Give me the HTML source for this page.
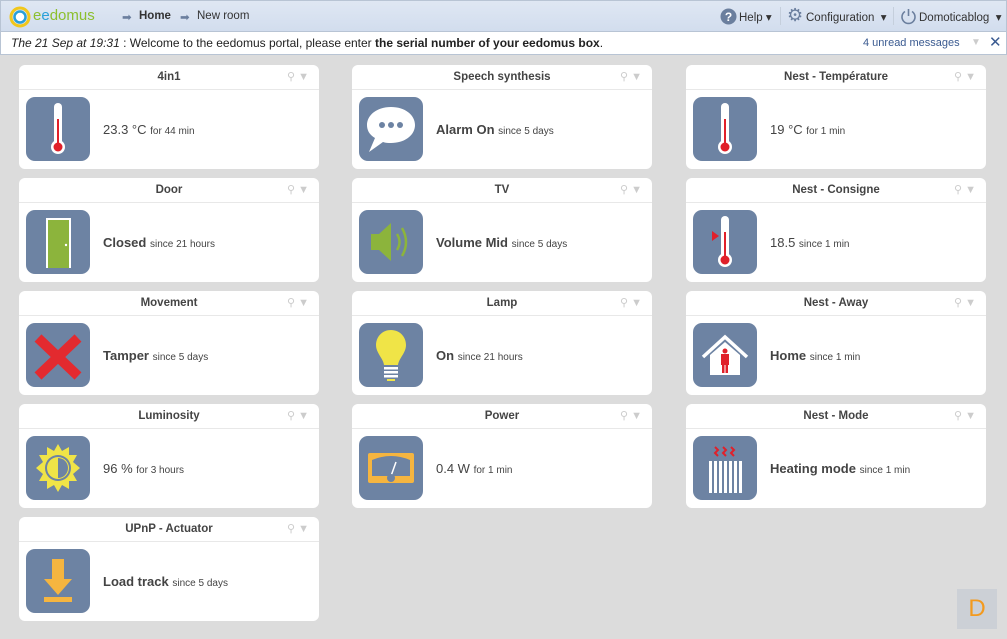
<!DOCTYPE html><html><head><meta charset="utf-8"><style>
body{margin:0;width:1007px;height:639px;background:#dcdcdc;font-family:"Liberation Sans",Arial,sans-serif;position:relative;overflow:hidden}
.top{position:absolute;left:0;top:0;width:1005px;height:30px;background:linear-gradient(#dfe7f3,#d2ddee);border:1px solid #b8c4d4;border-bottom:none}
.msg{position:absolute;left:0;top:31px;width:1005px;height:22px;background:#fff;border:1px solid #b8c4d4;font-size:12px;line-height:22px;color:#222}
.t{position:absolute;font-size:11.5px;color:#333;top:9px}
.card{position:absolute;width:300px;height:104px;background:#fff;border-radius:6px}
.card .h{height:24px;border-bottom:1px solid #e8e8e8;text-align:center;font-weight:bold;font-size:11.5px;line-height:24px;color:#444}
.card .tools{position:absolute;right:10px;top:5px;color:#ccc;font-size:11px}
.card svg{position:absolute;left:7px;top:32px}
.card .v{position:absolute;left:84px;top:57px;font-size:13px;color:#444}
.card .v b{color:#444}
.card .v small{font-size:10px}
</style></head><body>
<div class="top">
<svg style="position:absolute;left:8px;top:5px" width="22" height="22"><circle cx="11" cy="11" r="9" fill="none" stroke="#f1c71b" stroke-width="3"/><circle cx="11" cy="11" r="5.5" fill="#fff" stroke="#2aa0d8" stroke-width="2.5"/></svg>
<div class="t" style="left:32px;top:6px;font-size:15px;color:#8cbf2e">e<span style="color:#2aa0d8">e</span>domus</div>
<div class="t" style="left:121px;color:#6b7f9e">➡</div><div class="t" style="left:138px;font-weight:bold">Home</div>
<div class="t" style="left:179px;color:#6b7f9e">➡</div><div class="t" style="left:196px">New room</div>
<svg style="position:absolute;left:719px;top:7px" width="17" height="17"><circle cx="8.5" cy="8.5" r="8" fill="#6b7f9e"/><text x="8.5" y="13" font-size="12" font-weight="bold" fill="#fff" text-anchor="middle" font-family="Liberation Sans">?</text></svg>
<div class="t" style="left:738px">Help ▾</div>
<div style="position:absolute;left:779px;top:6px;width:1px;height:18px;background:#c5cfdc"></div>
<div class="t" style="left:786px;top:4px;font-size:18px;color:#6b7f9e">⚙</div>
<div class="t" style="left:805px">Configuration &nbsp;▾</div>
<div style="position:absolute;left:892px;top:6px;width:1px;height:18px;background:#c5cfdc"></div>
<svg style="position:absolute;left:899px;top:7px" width="17" height="17"><path d="M5 3.5A6.5 6.5 0 1 0 12 3.5" fill="none" stroke="#6b7f9e" stroke-width="1.6"/><line x1="8.5" y1="1" x2="8.5" y2="8" stroke="#6b7f9e" stroke-width="1.6"/></svg>
<div class="t" style="left:918px">Domoticablog &nbsp;▾</div>
</div>
<div class="msg"><span style="margin-left:10px"><i>The 21 Sep at 19:31 </i>: Welcome to the eedomus portal, please enter <b>the serial number of your eedomus box</b>.</span>
<span style="position:absolute;left:862px;color:#3a5a90;font-size:11px">4 unread messages</span><span style="position:absolute;left:970px;color:#ccc;font-size:10px">▼</span><span style="position:absolute;left:988px;color:#3a5a90;font-size:15px">✕</span></div>

<div class="card" style="left:19px;top:65px"><div class="h">4in1</div><div class="tools">⚲ ▼</div>
<svg width="64" height="64"><rect width="64" height="64" rx="9" fill="#6d83a3"/><rect x="28" y="6" width="8" height="42" rx="4" fill="#fff"/><circle cx="32" cy="50" r="7" fill="#fff"/><rect x="31" y="22" width="2" height="28" fill="#e0202a"/><circle cx="32" cy="50" r="4.5" fill="#e0202a"/></svg>
<div class="v">23.3 °C <small>for 44 min</small></div></div>
<div class="card" style="left:19px;top:178px"><div class="h">Door</div><div class="tools">⚲ ▼</div>
<svg width="64" height="64"><rect width="64" height="64" rx="9" fill="#6d83a3"/><rect x="20" y="8" width="25" height="50" fill="#fff"/><rect x="22" y="10" width="21" height="48" fill="#8cb43c"/><circle cx="40" cy="35" r="1.2" fill="#fff"/></svg>
<div class="v"><b>Closed</b> <small>since 21 hours</small></div></div>
<div class="card" style="left:19px;top:291px"><div class="h">Movement</div><div class="tools">⚲ ▼</div>
<svg width="64" height="64"><rect width="64" height="64" rx="9" fill="#6d83a3"/><path d="M12 15L52 53M52 15L12 53" stroke="#e32a2f" stroke-width="10"/></svg>
<div class="v"><b>Tamper</b> <small>since 5 days</small></div></div>
<div class="card" style="left:19px;top:404px"><div class="h">Luminosity</div><div class="tools">⚲ ▼</div>
<svg width="64" height="64"><rect width="64" height="64" rx="9" fill="#6d83a3"/><polygon points="32,8 36,15 43,11 43,19 51,19 47,26 54,32 47,38 51,45 43,45 43,53 36,49 32,56 28,49 21,53 21,45 13,45 17,38 10,32 17,26 13,19 21,19 21,11 28,15" fill="#f0e447"/><circle cx="32" cy="32" r="13" fill="#6d83a3"/><circle cx="32" cy="32" r="11" fill="#f0e447"/><path d="M32 22A10 10 0 0 1 32 42Z" fill="#6d83a3"/></svg>
<div class="v">96 % <small>for 3 hours</small></div></div>
<div class="card" style="left:19px;top:517px"><div class="h">UPnP - Actuator</div><div class="tools">⚲ ▼</div>
<svg width="64" height="64"><rect width="64" height="64" rx="9" fill="#6d83a3"/><path d="M26 10H38V30H46L32 46L18 30H26Z" fill="#f5b540"/><rect x="18" y="48" width="28" height="5" fill="#f5b540"/></svg>
<div class="v"><b>Load track</b> <small>since 5 days</small></div></div>

<div class="card" style="left:352px;top:65px"><div class="h">Speech synthesis</div><div class="tools">⚲ ▼</div>
<svg width="64" height="64"><rect width="64" height="64" rx="9" fill="#6d83a3"/><path d="M32 10C18 10 8 18 8 28C8 34 11 38 16 41L10 55L24 45C27 46 29 46 32 46C46 46 56 38 56 28C56 18 46 10 32 10Z" fill="#fff"/><circle cx="23" cy="28" r="3" fill="#6d83a3"/><circle cx="32" cy="28" r="3" fill="#6d83a3"/><circle cx="41" cy="28" r="3" fill="#6d83a3"/></svg>
<div class="v"><b>Alarm On</b> <small>since 5 days</small></div></div>
<div class="card" style="left:352px;top:178px"><div class="h">TV</div><div class="tools">⚲ ▼</div>
<svg width="64" height="64"><rect width="64" height="64" rx="9" fill="#6d83a3"/><path d="M12 24H20L32 13V51L20 40H12Z" fill="#8cb43c"/><path d="M38 24Q43 32 38 40M43 18Q51 32 43 46" fill="none" stroke="#8cb43c" stroke-width="2.5"/></svg>
<div class="v"><b>Volume Mid</b> <small>since 5 days</small></div></div>
<div class="card" style="left:352px;top:291px"><div class="h">Lamp</div><div class="tools">⚲ ▼</div>
<svg width="64" height="64"><rect width="64" height="64" rx="9" fill="#6d83a3"/><path d="M32 7C23 7 17 14 17 22C17 30 24 35 25 42H39C40 35 47 30 47 22C47 14 41 7 32 7Z" fill="#f0e447"/><rect x="25" y="44" width="14" height="2.5" fill="#fff"/><rect x="25" y="48" width="14" height="2.5" fill="#fff"/><rect x="25" y="52" width="14" height="2.5" fill="#fff"/><rect x="28" y="56" width="8" height="2" fill="#f0e447"/></svg>
<div class="v"><b>On</b> <small>since 21 hours</small></div></div>
<div class="card" style="left:352px;top:404px"><div class="h">Power</div><div class="tools">⚲ ▼</div>
<svg width="64" height="64"><rect width="64" height="64" rx="9" fill="#6d83a3"/><rect x="9" y="17" width="46" height="30" rx="2" fill="#f5b540"/><path d="M13 40V24Q32 16 51 24V40Z" fill="#6d83a3"/><line x1="32" y1="40" x2="37" y2="26" stroke="#fff" stroke-width="1.5"/><circle cx="32" cy="42" r="4" fill="#6d83a3"/></svg>
<div class="v">0.4 W <small>for 1 min</small></div></div>

<div class="card" style="left:686px;top:65px"><div class="h">Nest - Température</div><div class="tools">⚲ ▼</div>
<svg width="64" height="64"><rect width="64" height="64" rx="9" fill="#6d83a3"/><rect x="28" y="6" width="8" height="42" rx="4" fill="#fff"/><circle cx="32" cy="50" r="7" fill="#fff"/><rect x="31" y="22" width="2" height="28" fill="#e0202a"/><circle cx="32" cy="50" r="4.5" fill="#e0202a"/></svg>
<div class="v">19 °C <small>for 1 min</small></div></div>
<div class="card" style="left:686px;top:178px"><div class="h">Nest - Consigne</div><div class="tools">⚲ ▼</div>
<svg width="64" height="64"><rect width="64" height="64" rx="9" fill="#6d83a3"/><rect x="28" y="6" width="8" height="42" rx="4" fill="#fff"/><circle cx="32" cy="50" r="7" fill="#fff"/><rect x="31" y="22" width="2" height="28" fill="#e0202a"/><circle cx="32" cy="50" r="4.5" fill="#e0202a"/><polygon points="19,21 26,26 19,31" fill="#e0202a"/></svg>
<div class="v">18.5 <small>since 1 min</small></div></div>
<div class="card" style="left:686px;top:291px"><div class="h">Nest - Away</div><div class="tools">⚲ ▼</div>
<svg width="64" height="64"><rect width="64" height="64" rx="9" fill="#6d83a3"/><path d="M10 34L32 14L54 34" fill="none" stroke="#fff" stroke-width="3.5"/><path d="M17 32L32 19L47 32V52H17Z" fill="#fff"/><circle cx="32" cy="28" r="2.5" fill="#e0202a"/><rect x="28" y="31" width="8" height="11" fill="#e0202a"/><rect x="29" y="42" width="2.5" height="8" fill="#e0202a"/><rect x="32.5" y="42" width="2.5" height="8" fill="#e0202a"/></svg>
<div class="v"><b>Home</b> <small>since 1 min</small></div></div>
<div class="card" style="left:686px;top:404px"><div class="h">Nest - Mode</div><div class="tools">⚲ ▼</div>
<svg width="64" height="64"><rect width="64" height="64" rx="9" fill="#6d83a3"/><path d="M22 11l3 3-3 3 3 3M30 11l3 3-3 3 3 3M38 11l3 3-3 3 3 3" fill="none" stroke="#e0202a" stroke-width="2"/><g fill="#fff"><rect x="16" y="25" width="3" height="32"/><rect x="21" y="25" width="3" height="32"/><rect x="26" y="25" width="3" height="32"/><rect x="31" y="25" width="3" height="32"/><rect x="36" y="25" width="3" height="32"/><rect x="41" y="25" width="3" height="32"/><rect x="46" y="25" width="3" height="32"/></g></svg>
<div class="v"><b>Heating mode</b> <small>since 1 min</small></div></div>

<div style="position:absolute;left:957px;top:589px;width:40px;height:40px;background:#ccd0d6;color:#f39a1e;font-size:24px;text-align:center;line-height:40px">D</div>
</body></html>
